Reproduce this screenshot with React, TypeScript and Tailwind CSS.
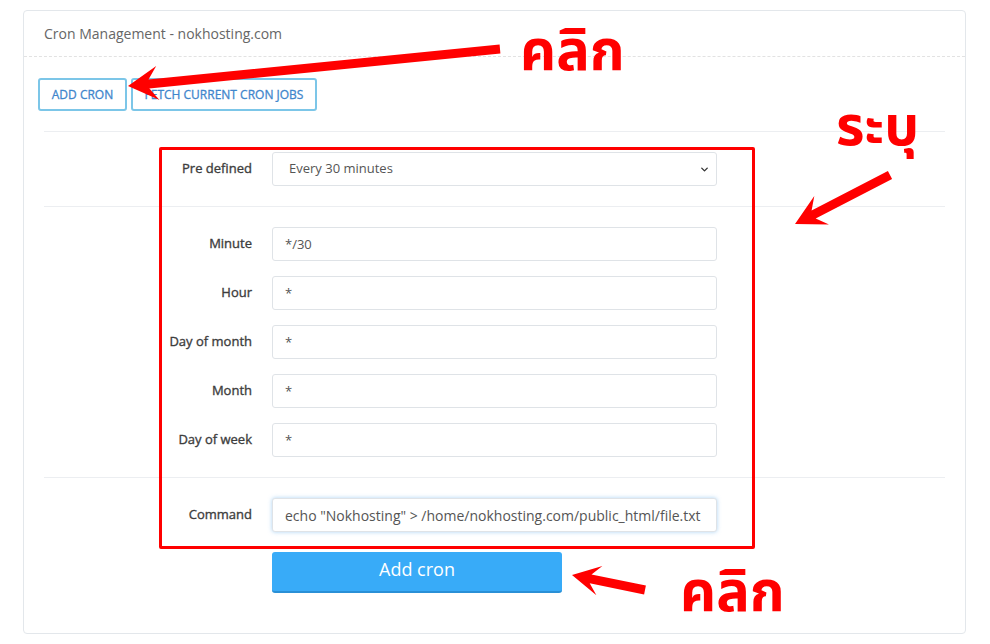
import React from "react";
import { ChevronDown } from "lucide-react";

type Pt = [number, number];

// builds one polygon: flat shaft + notched head, from tail to tip
const arrowPoints = (tail: Pt, tip: Pt, headLen: number, headHalf: number, notch: number, shaftHalf: number) => {
  const dx = tip[0] - tail[0];
  const dy = tip[1] - tail[1];
  const len = Math.hypot(dx, dy);
  const ux = dx / len;
  const uy = dy / len;
  const nx = -uy;
  const ny = ux;
  const at = (s: number, t: number): Pt => [tip[0] - ux * s + nx * t, tip[1] - uy * s + ny * t];
  const pts: Pt[] = [
    [tail[0] + nx * shaftHalf, tail[1] + ny * shaftHalf],
    at(notch, shaftHalf),
    at(headLen, headHalf),
    tip,
    at(headLen, -headHalf),
    at(notch, -shaftHalf),
    [tail[0] - nx * shaftHalf, tail[1] - ny * shaftHalf],
  ];
  return pts.map((p) => `${p[0].toFixed(1)},${p[1].toFixed(1)}`).join(" ");
};

const fields = [
  { label: "Minute", value: "*/30" },
  { label: "Hour", value: "*" },
  { label: "Day of month", value: "*" },
  { label: "Month", value: "*" },
  { label: "Day of week", value: "*" },
];

const Row = ({ label, children }: { label: string; children: React.ReactNode }) => (
  <div className="flex items-center">
    <label className="w-[208px] text-right text-[13px] text-[#3d3d3d] [-webkit-text-stroke:0.35px_#3d3d3d]">
      {label}
    </label>
    <div className="ml-[20px] w-[445px]">{children}</div>
  </div>
);

const inputCls =
  "block w-full h-[34px] rounded-[3px] border border-[#dfe3e7] bg-white px-[12px] text-[13px] text-[#555] outline-none font-['Open_Sans',sans-serif]";

const btnCls =
  "h-[33px] rounded-[3px] border-2 border-[#7cc6e8] text-[12px] text-[#3f86cc] [-webkit-text-stroke:0.3px_#3f86cc]";

const thai = "pointer-events-none absolute font-bold text-[#f00] font-['Noto_Sans_Thai',Loma,Garuda,Tahoma,'DejaVu_Sans',sans-serif]";

export default function App() {
  return (
    <div className="relative w-[990px] h-[644px] overflow-hidden bg-white font-['Open_Sans',sans-serif]">
      <div className="ml-[23px] mt-[10px] w-[943px] h-[624px] rounded-[4px] border border-[#e3e7eb] bg-white">
        {/* header */}
        <div className="flex h-[46px] items-center border-b border-dashed border-[#e2e2e2] px-[20px] text-[14px] text-[#666]">
          Cron Management - nokhosting.com
        </div>

        <div className="pt-[21px]">
          <div className="flex gap-[4px] pl-[14px]">
            <button className={btnCls + " w-[89px]"}>ADD CRON</button>
            <button className={btnCls + " w-[186px]"}>FETCH CURRENT CRON JOBS</button>
          </div>

          <div className="mx-[20px] mt-[20px] border-t border-[#eceef1]">
            <div className="py-[20px]">
              <Row label="Pre defined">
                <div className="relative">
                  <select className={inputCls + " appearance-none pl-[16px] text-[#444]"} defaultValue="30">
                    <option value="30">Every 30 minutes</option>
                  </select>
                  <ChevronDown
                    size={11}
                    strokeWidth={3}
                    className="pointer-events-none absolute right-[7px] top-[12px] text-[#333]"
                  />
                </div>
              </Row>
            </div>

            <div className="flex flex-col gap-[15px] border-t border-[#eceef1] py-[20px]">
              {fields.map((f) => (
                <Row key={f.label} label={f.label}>
                  <input className={inputCls} readOnly value={f.value} />
                </Row>
              ))}
            </div>

            <div className="border-t border-[#eceef1] pt-[20px]">
              <Row label="Command">
                <input
                  className={inputCls + " border-[#66afe9] text-[14px] text-[#3a3a3a] shadow-[0_0_4px_rgba(102,175,233,0.55)]"}
                  readOnly
                  value={'echo "Nokhosting" > /home/nokhosting.com/public_html/file.txt'}
                />
              </Row>
              <div className="ml-[228px] mt-[20px]">
                <button className="h-[41px] w-[290px] rounded-[3px] border-b-2 border-[#2a90d6] bg-[#38abf8] pb-[4px] text-[18px] text-white">
                  Add cron
                </button>
              </div>
            </div>
          </div>
        </div>
      </div>

      {/* annotations */}
      <div className="pointer-events-none absolute left-[159px] top-[147px] h-[402px] w-[596px] rounded-[2px] border-[3px] border-[#f00]" />
      <svg className="pointer-events-none absolute left-0 top-0" width={990} height={644}>
        <polygon points={arrowPoints([500, 49], [128, 86], 30, 17, 21, 4.5)} fill="#f00" />
        <polygon points={arrowPoints([890, 175], [795, 224], 30, 16, 21, 4.5)} fill="#f00" />
        <polygon points={arrowPoints([645, 590], [572, 575], 28, 15, 19, 4.5)} fill="#f00" />
      </svg>
      <div className={thai + " left-[520px] top-[13px] text-[56px] leading-[80px]"}>คลิก</div>
      <div className={thai + " left-[836px] top-[89px] text-[55px] leading-[80px]"}>ระบุ</div>
      <div className={thai + " left-[680px] top-[554px] text-[56px] leading-[80px]"}>คลิก</div>
    </div>
  );
}
